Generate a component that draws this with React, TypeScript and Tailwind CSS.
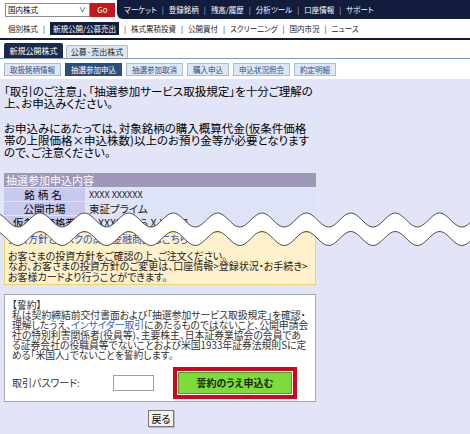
import React from "react";

const topLinks = ["マーケット", "登録銘柄", "残高/履歴", "分析ツール", "口座情報", "サポート"];
const subLinks = ["株式累積投資", "公開買付", "スクリーニング", "国内市況", "ニュース"];
const actions = ["取扱銘柄情報", "抽選参加申込", "抽選参加取消", "購入申込", "申込状況照会", "約定明細"];

function wave(c: number, amp: number, period: number, phase: number) {
  const pts: string[] = [];
  for (let x = -2; x <= 472; x += 2) {
    const y = c - amp * Math.cos(((x - phase) / period) * Math.PI * 2);
    pts.push(`${x},${y.toFixed(2)}`);
  }
  return pts;
}

function Tear() {
  const top = wave(220, 7, 44.4, 40);
  const bottom = wave(238.5, 7, 44.4, 40);
  const fill = `M${top.join(" L")} L${bottom.slice().reverse().join(" L")} Z`;
  return (
    <svg className="absolute left-0 top-0" width="470" height="434" viewBox="0 0 470 434">
      <path d={fill} fill="#ffffff" />
      <path d={`M${top.join(" L")}`} fill="none" stroke="#555" strokeWidth="1" />
      <path d={`M${bottom.join(" L")}`} fill="none" stroke="#555" strokeWidth="1" />
    </svg>
  );
}

export default function App() {
  return (
    <div className="relative h-[434px] w-[470px] overflow-hidden bg-[#e2e4f8] font-['Noto_Sans_CJK_JP','Noto_Sans',sans-serif] text-black [font-feature-settings:'palt']">
      {/* header */}
      <div className="flex h-[19px]">
        <div className="flex w-[117px] items-center bg-white pl-[5px]">
          <div className="flex h-[14px] w-[85px] items-center justify-between border border-[#8c8c8c] bg-white pl-[2px] pr-[3px] text-[7.5px] leading-none">
            <span>国内株式</span>
            <span className="text-[7px]">∨</span>
          </div>
          <div className="flex h-[14px] w-[25px] items-center justify-center bg-[#c8161d] text-[8px] leading-none text-white">Go</div>
        </div>
        <div className="flex flex-1 items-center rounded-bl-[6px] bg-[#121d3d] pl-[7px] text-[7.5px] leading-none text-white">
          {topLinks.map((t, i) => (
            <span key={t} className="flex items-center">
              {i > 0 && <span className="px-[5px] text-[#b8bfd3]">|</span>}
              {t}
            </span>
          ))}
        </div>
      </div>
      <div className="flex h-[21px] items-center border-b-2 border-[#121d3d] bg-white pl-[8px] text-[7.5px] leading-none text-[#222]">
        <span>個別株式</span>
        <span className="px-[5px]">|</span>
        <span className="bg-[#121d3d] px-[3px] py-[3px] text-white">新規公開/公募売出</span>
        <span className="px-[5px]">|</span>
        {subLinks.map((t, i) => (
          <span key={t} className="flex items-center">
            {i > 0 && <span className="px-[5px]">|</span>}
            {t}
          </span>
        ))}
      </div>

      {/* tabs */}
      <div className="bg-white pt-[3px]">
        <div className="flex items-end gap-[3px] border-b border-[#8397b8] pl-[4px]">
          <div className="flex h-[15px] w-[59px] items-center justify-center rounded-t-[2px] bg-[#1b2a4b] text-[8px] leading-none text-white">新規公開株式</div>
          <div className="flex h-[13px] w-[62px] items-center justify-center rounded-t-[2px] border border-b-0 border-[#a9bbd6] bg-[#dce6f5] text-[8px] leading-none text-[#222]">公募·売出株式</div>
        </div>
        <div className="flex gap-[4px] pb-[3px] pl-[4px] pt-[4px]">
          {actions.map((a, i) => (
            <div
              key={a}
              className={
                i === 1
                  ? "flex h-[13px] items-center border border-[#2b4a78] bg-[#2e4e7f] px-[5px] text-[7.5px] leading-none text-white"
                  : "flex h-[13px] items-center border border-[#a9bbd8] bg-[#dfe7f4] px-[5px] text-[7.5px] leading-none text-[#2b4f8a]"
              }
            >
              {a}
            </div>
          ))}
        </div>
      </div>

      {/* main */}
      <div className="w-[316px] pl-[4px] pt-[6px]">
        <p className="whitespace-nowrap text-[11.5px] leading-[12px]">
          「取引のご注意」、「抽選参加サービス取扱規定」を十分ご理解の
          <br />
          上、お申込みください。
        </p>
        <p className="mt-[13px] whitespace-nowrap text-[11.5px] leading-[12px]">
          お申込みにあたっては、対象銘柄の購入概算代金(仮条件価格
          <br />
          帯の上限価格×申込株数)以上のお預り金等が必要となります
          <br />
          ので、ご注意ください。
        </p>

        <div className="mt-[15px] grid grid-cols-[81px_1fr] gap-[1px] text-[10.5px] leading-[13px]">
          <div className="col-span-2 bg-[#9e98b9] px-[2px] text-[11px] leading-[14px] text-white">抽選参加申込内容</div>
          <div className="bg-[#c7c9ed] text-center tracking-[3px]">銘柄名</div>
          <div className="bg-[#dfe3f7] pl-[3px] text-[9px] text-[#222]">XXXX XXXXXX</div>
          <div className="bg-[#c7c9ed] text-center">公開市場</div>
          <div className="bg-[#dfe3f7] pl-[3px] text-[#222]">東証プライム</div>
          <div className="bg-[#c7c9ed] text-center">仮条件価格帯</div>
          <div className="bg-[#dfe3f7] pl-[3px] text-[#222]">X,XXX円 から X,XXX円</div>
        </div>

        <div className="mt-[3px] border border-[#f0d36b] bg-[#fff1cc] px-[3px] pb-[2px] pt-[1px] text-[10px] leading-[10.5px] text-[#222]">
          <div className="mb-[6px] text-[#1d4fc0]">投資方針とリスクの高い金融商品はこちら</div>
          <div className="whitespace-nowrap">
            お客さまの投資方針をご確認の上、ご注文ください。
            <br />
            なお、お客さまの投資方針のご変更は、口座情報&gt;登録状況・お手続き&gt;
            <br />
            お客様カードより行うことができます。
          </div>
        </div>

        <div className="mt-[9px] border border-[#a9a9b3] bg-white pb-[2px] pl-[7px] pt-[5px] text-[9.8px] leading-[10px] text-[#333]">
          <div className="whitespace-nowrap">
            【誓約】
            <br />
            私は契約締結前交付書面および「抽選参加サービス取扱規定」を確認・
            <br />
            理解したうえ、<span className="text-[#2f5fd0]">インサイダー取引</span>にあたるものではないこと、公開申請会
            <br />
            社の特別利害関係者(役員等)、主要株主、日本証券業協会の会員であ
            <br />
            る証券会社の役職員等でないことおよび米国1933年証券法規則Sに定
            <br />
            める「米国人」でないことを誓約します。
          </div>
          <div className="mt-[7px] flex items-center">
            <span className="w-[101px] text-[10px]">取引パスワード:</span>
            <div className="h-[16px] w-[41px] border border-[#a0a0a0] bg-white" />
            <div className="ml-[19px] border-[4px] border-[#d7001c] bg-white p-[1px]">
              <div className="flex h-[22px] w-[114px] items-center justify-center border border-[#4f9a22] bg-[#7ddb3c] text-[10px] font-bold leading-none text-[#1a2a10]">
                誓約のうえ申込む
              </div>
            </div>
          </div>
        </div>

        <div className="mt-[8px] flex justify-center pl-[2px]">
          <div className="flex h-[17px] w-[26px] items-center justify-center border border-[#777] bg-[#f2f2f2] text-[10px] leading-none shadow-[1px_1px_0_#bbb]">
            戻る
          </div>
        </div>
      </div>

      <Tear />
    </div>
  );
}
